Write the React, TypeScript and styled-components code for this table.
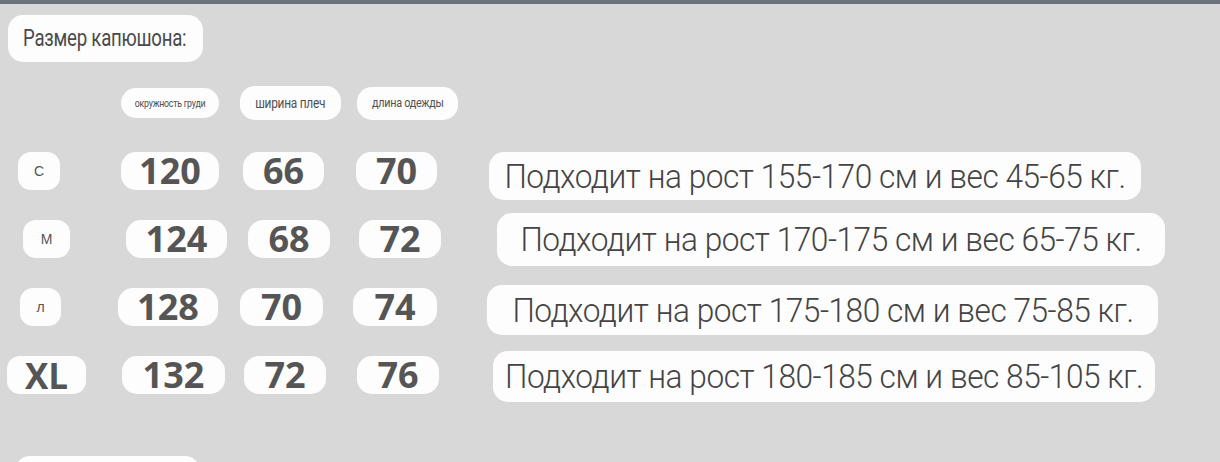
import React from "react";
import styled, { createGlobalStyle } from "styled-components";

const Global = createGlobalStyle`
  html, body { margin: 0; padding: 0; background: #d8d8d8; }
  * { box-sizing: border-box; }
`;

const Page = styled.div`
  width: 1220px;
  height: 462px;
  overflow: hidden;
  background: #d8d8d8;
  border-top: 4px solid #6b747c;
  display: flex;
  flex-direction: column;
  & > * { flex-shrink: 0; }
`;

const Condensed = styled.span<{ $scale: number; $origin?: string }>`
  display: inline-block;
  transform: scaleX(${(p) => p.$scale});
  transform-origin: ${(p) => p.$origin ?? "center"};
`;

const TitlePill = styled.div`
  margin: 11px 0 0 8px;
  width: 195px;
  height: 47px;
  border-radius: 15px;
  background: #fdfdfd;
  display: flex;
  align-items: center;
  padding-left: 15px;
  font-family: Roboto, "Liberation Sans", sans-serif;
  font-size: 23px;
  font-weight: 400;
  letter-spacing: -0.3px;
  color: #4a4a4a;
  white-space: nowrap;
`;

const HeaderRow = styled.div`
  margin-top: 24px;
  height: 34px;
  display: flex;
  align-items: center;
`;

const HeaderPill = styled.div<{ $x: number; $w: number; $h: number; $fs: number }>`
  margin-left: ${(p) => p.$x}px;
  width: ${(p) => p.$w}px;
  height: ${(p) => p.$h}px;
  border-radius: 15px;
  background: #fdfdfd;
  display: flex;
  align-items: center;
  justify-content: center;
  font-family: Roboto, "Liberation Sans", sans-serif;
  font-size: ${(p) => p.$fs}px;
  letter-spacing: -0.3px;
  color: #505050;
  white-space: nowrap;
`;

const Rows = styled.div`
  margin-top: 24px;
  display: flex;
  flex-direction: column;
  gap: 14px;
`;

const Row = styled.div`
  height: 54px;
  display: flex;
  align-items: center;
`;

const SizePill = styled.div<{ $x: number; $w: number; $bold?: boolean }>`
  margin-left: ${(p) => p.$x}px;
  width: ${(p) => p.$w}px;
  height: 38px;
  border-radius: 13px;
  background: #fdfdfd;
  display: flex;
  align-items: center;
  justify-content: center;
  color: #555;
  font-family: ${(p) => (p.$bold ? '"Open Sans", sans-serif' : '"Liberation Sans", Arial, sans-serif')};
  font-size: ${(p) => (p.$bold ? 35 : 14)}px;
  font-weight: ${(p) => (p.$bold ? 700 : 400)};
`;

const NumPill = styled.div<{ $x: number; $w: number }>`
  margin-left: ${(p) => p.$x}px;
  width: ${(p) => p.$w}px;
  height: 38px;
  border-radius: 15px;
  background: #fdfdfd;
  display: flex;
  align-items: center;
  justify-content: center;
  font-family: "Open Sans", sans-serif;
  font-weight: 700;
  font-size: 36px;
  color: #555;
  line-height: 1;
`;

const DescPill = styled.div<{ $x: number; $w: number; $h: number; $dy: number }>`
  margin-left: ${(p) => p.$x}px;
  margin-top: ${(p) => p.$dy * 2}px;
  width: ${(p) => p.$w}px;
  height: ${(p) => p.$h}px;
  border-radius: 15px;
  background: #fdfdfd;
  display: flex;
  align-items: center;
  justify-content: center;
  font-family: Roboto, "Liberation Sans", sans-serif;
  font-size: 34px;
  font-weight: 300;
  letter-spacing: -0.5px;
  color: #444;
  white-space: nowrap;
`;

const BottomPill = styled.div`
  margin: 54px 0 0 15px;
  width: 185px;
  height: 40px;
  border-radius: 15px;
  background: #fdfdfd;
`;

type Cell = { x: number; w: number };
type RowData = {
  label: string;
  bold?: boolean;
  labelCell: Cell;
  nums: { v: string; x: number; w: number }[];
  desc: { text: string; x: number; w: number; h: number; dy: number };
};

const rows: RowData[] = [
  {
    label: "С",
    labelCell: { x: 18, w: 42 },
    nums: [
      { v: "120", x: 61, w: 98 },
      { v: "66", x: 24, w: 81 },
      { v: "70", x: 32, w: 81 },
    ],
    desc: { text: "Подходит на рост 155-170 см и вес 45-65 кг.", x: 52, w: 652, h: 48, dy: 5 },
  },
  {
    label: "М",
    labelCell: { x: 23, w: 47 },
    nums: [
      { v: "124", x: 56, w: 101 },
      { v: "68", x: 21, w: 82 },
      { v: "72", x: 29, w: 82 },
    ],
    desc: { text: "Подходит на рост 170-175 см и вес 65-75 кг.", x: 56, w: 668, h: 53, dy: 0 },
  },
  {
    label: "л",
    labelCell: { x: 20, w: 41 },
    nums: [
      { v: "128", x: 57, w: 100 },
      { v: "70", x: 22, w: 83 },
      { v: "74", x: 30, w: 84 },
    ],
    desc: { text: "Подходит на рост 175-180 см и вес 75-85 кг.", x: 50, w: 671, h: 50, dy: 3 },
  },
  {
    label: "XL",
    bold: true,
    labelCell: { x: 7, w: 79 },
    nums: [
      { v: "132", x: 36, w: 103 },
      { v: "72", x: 19, w: 82 },
      { v: "76", x: 31, w: 82 },
    ],
    desc: { text: "Подходит на рост 180-185 см и вес 85-105 кг.", x: 54, w: 662, h: 51, dy: 1 },
  },
];

export default function App() {
  return (
    <>
      <Global />
      <Page>
        <TitlePill>
          <Condensed $scale={0.81} $origin="left">
            Размер капюшона:
          </Condensed>
        </TitlePill>
        <HeaderRow>
          <HeaderPill $x={121} $w={98} $h={30} $fs={11}>
            <Condensed $scale={0.8}>окружность груди</Condensed>
          </HeaderPill>
          <HeaderPill $x={21} $w={101} $h={34} $fs={14}>
            <Condensed $scale={0.85}>ширина плеч</Condensed>
          </HeaderPill>
          <HeaderPill $x={16} $w={101} $h={33} $fs={12}>
            <Condensed $scale={0.9}>длина одежды</Condensed>
          </HeaderPill>
        </HeaderRow>
        <Rows>
          {rows.map((r) => (
            <Row key={r.label}>
              <SizePill $x={r.labelCell.x} $w={r.labelCell.w} $bold={r.bold}>
                {r.label}
              </SizePill>
              {r.nums.map((n, i) => (
                <NumPill key={i} $x={n.x} $w={n.w}>
                  {n.v}
                </NumPill>
              ))}
              <DescPill $x={r.desc.x} $w={r.desc.w} $h={r.desc.h} $dy={r.desc.dy}>
                <Condensed $scale={0.93}>{r.desc.text}</Condensed>
              </DescPill>
            </Row>
          ))}
        </Rows>
        <BottomPill />
      </Page>
    </>
  );
}
